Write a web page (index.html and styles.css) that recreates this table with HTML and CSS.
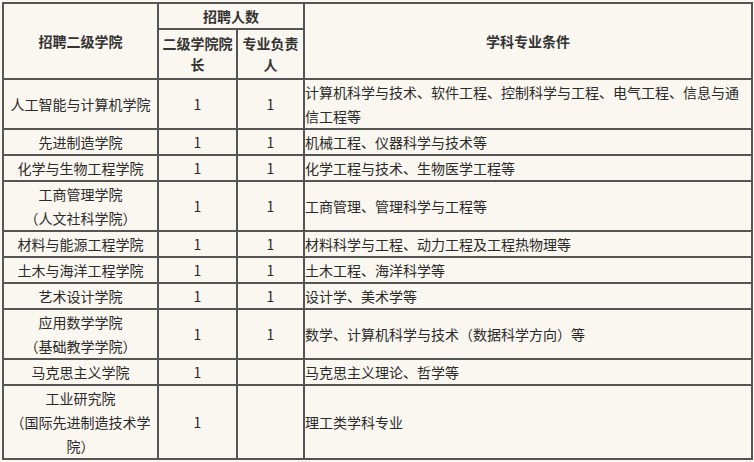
FILE: index.html
```html
<!DOCTYPE html>
<html lang="zh-CN">
<head>
<meta charset="utf-8">
<title>招聘岗位</title>
<link rel="stylesheet" href="styles.css">
</head>
<body>
<table class="recruit">
  <colgroup>
    <col class="c-college">
    <col class="c-dean">
    <col class="c-lead">
    <col class="c-cond">
  </colgroup>
  <thead>
    <tr class="h1">
      <th rowspan="2">招聘二级学院</th>
      <th colspan="2">招聘人数</th>
      <th rowspan="2">学科专业条件</th>
    </tr>
    <tr class="h2">
      <th>二级学院院长</th>
      <th>专业负责人</th>
    </tr>
  </thead>
  <tbody>
    <tr><td>人工智能与计算机学院</td><td>1</td><td>1</td><td class="cond">计算机科学与技术、软件工程、控制科学与工程、电气工程、信息与通信工程等</td></tr>
    <tr><td>先进制造学院</td><td>1</td><td>1</td><td class="cond">机械工程、仪器科学与技术等</td></tr>
    <tr><td>化学与生物工程学院</td><td>1</td><td>1</td><td class="cond">化学工程与技术、生物医学工程等</td></tr>
    <tr><td>工商管理学院<br>（人文社科学院）</td><td>1</td><td>1</td><td class="cond">工商管理、管理科学与工程等</td></tr>
    <tr><td>材料与能源工程学院</td><td>1</td><td>1</td><td class="cond">材料科学与工程、动力工程及工程热物理等</td></tr>
    <tr><td>土木与海洋工程学院</td><td>1</td><td>1</td><td class="cond">土木工程、海洋科学等</td></tr>
    <tr><td>艺术设计学院</td><td>1</td><td>1</td><td class="cond">设计学、美术学等</td></tr>
    <tr><td>应用数学学院<br>（基础教学学院）</td><td>1</td><td>1</td><td class="cond">数学、计算机科学与技术（数据科学方向）等</td></tr>
    <tr><td>马克思主义学院</td><td>1</td><td></td><td class="cond">马克思主义理论、哲学等</td></tr>
    <tr><td>工业研究院<br>（国际先进制造技术学院）</td><td>1</td><td></td><td class="cond">理工类学科专业</td></tr>
  </tbody>
</table>
</body>
</html>
```

FILE: styles.css
```css
html, body {
  margin: 0;
  padding: 0;
  background: #faf7f0;
}

body {
  padding: 2px 0 0 2px;
  font-family: "Noto Sans CJK SC", "Noto Sans", sans-serif;
  font-size: 14px;
  color: #2a2a2a;
}

.recruit {
  border-collapse: collapse;
  table-layout: fixed;
  width: 749px;
  background: #faf7f0;
}

.c-college { width: 155px; }
.c-dean { width: 79px; }
.c-lead { width: 67px; }
.c-cond { width: 448px; }

.recruit th,
.recruit td {
  border: 2px solid #555;
  padding: 0;
  line-height: 24px;
  text-align: center;
  vertical-align: middle;
}

.recruit th {
  font-weight: bold;
  color: #333;
}

.recruit .h1 th {
  height: 24px;
}

.recruit .h2 th {
  height: 48px;
  line-height: 21px;
}

.recruit td.cond {
  text-align: left;
  padding-left: 0;
}
```
